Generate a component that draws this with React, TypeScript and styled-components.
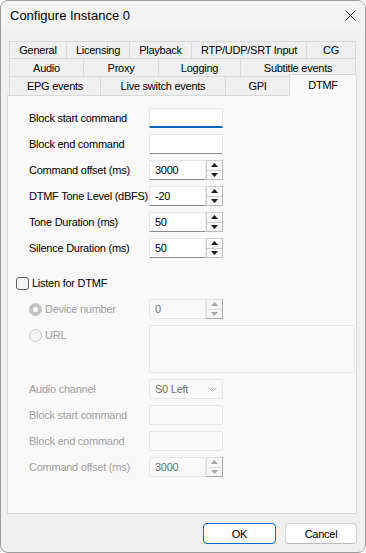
import { FC, ReactNode } from "react";
import styled, { createGlobalStyle } from "styled-components";

const GlobalStyle = createGlobalStyle`
  html, body {
    margin: 0;
    padding: 0;
    background: #ffffff;
  }
  body {
    font-family: "Liberation Sans", Arial, sans-serif;
    font-size: 11px;
    letter-spacing: -0.25px;
    color: #000;
  }
  * {
    box-sizing: border-box;
  }
`

const Window = styled.div`
  width: 366px;
  height: 553px;
  border: 1px solid #9c9c9c;
  border-radius: 8px;
  background: #f0f0f0;
  display: flex;
  flex-direction: column;
  overflow: hidden;
`

const TitleBar = styled.div`
  height: 29px;
  display: flex;
  align-items: center;
  justify-content: space-between;
  padding: 0 9px 0 9px;
  background: #f3f3f3;
`

const Title = styled.span`
  font-size: 13px;
  letter-spacing: 0;
`

const Body = styled.div`
  flex: 1;
  display: flex;
  flex-direction: column;
  padding: 11px 8px 8px 6px;
`

const TabStrip = styled.div`
  display: flex;
  flex-direction: column;
  padding: 0 2px;
`

const TabRow = styled.div<{ $h: number }>`
  display: flex;
  height: ${p => p.$h}px;
`

const Tab = styled.div<{ $w: number; $first?: boolean; $active?: boolean }>`
  width: ${p => p.$w}px;
  flex: none;
  display: flex;
  align-items: center;
  justify-content: center;
  white-space: nowrap;
  border-top: 1px solid #d9d9d9;
  border-right: 1px solid #d9d9d9;
  border-left: ${p => (p.$first || p.$active ? "1px solid #d9d9d9" : "none")};
  background: ${p => (p.$active ? "#f9f9f9" : "#f0f0f0")};
  ${p => p.$active && `
    position: relative;
    z-index: 1;
    height: 22px;
    margin: -2px 0 -1px -1px;
    padding-bottom: 2px;
  `}
`

const Panel = styled.div`
  height: 419px;
  border: 1px solid #d9d9d9;
  background: #f9f9f9;
  padding: 12px 1px 0 8px;
  display: flex;
  flex-direction: column;
`

const FormGrid = styled.div`
  display: grid;
  grid-template-columns: 120px auto;
  row-gap: 6px;
  margin-left: 13px;
  align-items: center;
`

const Label = styled.div<{ $disabled?: boolean; $top?: boolean }>`
  display: flex;
  align-items: center;
  height: 20px;
  white-space: nowrap;
  align-self: ${p => (p.$top ? "start" : "center")};
  color: ${p => (p.$disabled ? "#a0a0a0" : "#000")};
`

const TextBox = styled.input<{ $focused?: boolean; $w?: number }>`
  width: ${p => p.$w ?? 74}px;
  height: 20px;
  margin: 0;
  padding: 0 0 0 5px;
  font: inherit;
  letter-spacing: inherit;
  color: #000;
  background: #ffffff;
  border: 1px solid #e6e6e6;
  border-bottom: ${p => (p.$focused ? "2px solid #0067c0" : "1px solid #8a8a8a")};
  border-radius: 1px;
  outline: none;

  &:disabled {
    background: #f9f9f9;
    border: 1px solid #e6e6e6;
    color: #707070;
  }
`

const TextArea = styled.div`
  width: 206px;
  height: 48px;
  border: 1px solid #e6e6e6;
  border-radius: 1px;
  background: #f9f9f9;
`

const SpinWrap = styled.div`
  display: flex;
  width: 74px;
  height: 20px;
`

const SpinButtons = styled.div<{ $disabled?: boolean }>`
  width: 17px;
  display: flex;
  flex-direction: column;
  border-right: 1px solid ${p => (p.$disabled ? "#a8a8a8" : "#bcbcbc")};
  border-bottom: 1px solid ${p => (p.$disabled ? "#a8a8a8" : "#bcbcbc")};
  background: #f0f0f0;
`

const SpinButton = styled.div<{ $disabled?: boolean }>`
  flex: 1;
  display: flex;
  align-items: center;
  justify-content: center;
  border: 1px solid ${p => (p.$disabled ? "#e0e0e0" : "#cfcfcf")};
  border-right: none;
  border-bottom: none;
  background: ${p => (p.$disabled ? "#f6f6f6" : "#fbfbfb")};
  color: ${p => (p.$disabled ? "#a8a8a8" : "#1a1a1a")};
`

const SelectBox = styled.div`
  width: 74px;
  height: 20px;
  display: flex;
  align-items: center;
  justify-content: space-between;
  padding: 0 5px 0 5px;
  border: 1px solid #e6e6e6;
  border-radius: 2px;
  background: #f9f9f9;
  color: #707070;
`

const CheckRow = styled.div`
  display: flex;
  align-items: center;
  height: 18px;
  margin-top: 16px;
  gap: 3px;
`

const CheckBox = styled.div`
  width: 13px;
  height: 13px;
  border: 1px solid #5f5f5f;
  border-radius: 3px;
  background: #f5f5f5;
`

const LowerGrid = styled(FormGrid)`
  margin-top: 7px;
`

const Radio = styled.span<{ $checked?: boolean }>`
  width: 13px;
  height: 13px;
  margin-right: 3px;
  border-radius: 50%;
  flex: none;
  display: flex;
  align-items: center;
  justify-content: center;
  background: ${p => (p.$checked ? "#c2c2c2" : "#f6f6f6")};
  border: ${p => (p.$checked ? "none" : "1px solid #c6c6c6")};

  &::after {
    content: "";
    display: ${p => (p.$checked ? "block" : "none")};
    width: 5px;
    height: 5px;
    border-radius: 50%;
    background: #ffffff;
  }
`

const Footer = styled.div`
  display: flex;
  justify-content: flex-end;
  gap: 9px;
  margin-top: 9px;
`

const Button = styled.button<{ $default?: boolean; $w: number }>`
  width: ${p => p.$w}px;
  height: 21px;
  margin: 0;
  padding: 0;
  font: inherit;
  letter-spacing: inherit;
  color: #000;
  background: #fdfdfd;
  border: 1px solid ${p => (p.$default ? "#0067c0" : "#d3d3d3")};
  border-bottom-color: ${p => (p.$default ? "#0067c0" : "#b9b9b9")};
  border-radius: 4px;
`

const Arrow: FC<{ up?: boolean }> = ({ up }) => (
    <svg width="7" height="4" viewBox="0 0 7 4">
        <path d={up ? "M0 4 L3.5 0 L7 4 Z" : "M0 0 L3.5 4 L7 0 Z"} fill="currentColor" />
    </svg>
)

const Spin: FC<{ value: string; disabled?: boolean }> = ({ value, disabled }) => (
    <SpinWrap>
        <TextBox $w={57} value={value} readOnly disabled={disabled} />
        <SpinButtons $disabled={disabled}>
            <SpinButton $disabled={disabled}><Arrow up /></SpinButton>
            <SpinButton $disabled={disabled}><Arrow /></SpinButton>
        </SpinButtons>
    </SpinWrap>
)

type TabDef = { label: string; w: number; active?: boolean };

const rows: { h: number; tabs: TabDef[] }[] = [
    {
        h: 17,
        tabs: [
            { label: "General", w: 58 },
            { label: "Licensing", w: 63 },
            { label: "Playback", w: 62 },
            { label: "RTP/UDP/SRT Input", w: 115 },
            { label: "CG", w: 49 },
        ],
    },
    {
        h: 18,
        tabs: [
            { label: "Audio", w: 75 },
            { label: "Proxy", w: 75 },
            { label: "Logging", w: 82 },
            { label: "Subtitle events", w: 115 },
        ],
    },
    {
        h: 19,
        tabs: [
            { label: "EPG events", w: 92 },
            { label: "Live switch events", w: 125 },
            { label: "GPI", w: 64 },
            { label: "DTMF", w: 68, active: true },
        ],
    },
]

const Row: FC<{ label: string; disabled?: boolean; children: ReactNode }> = ({ label, disabled, children }) => (
    <>
        <Label $disabled={disabled}>{label}</Label>
        {children}
    </>
)

export default function App() {
    return (
        <>
            <GlobalStyle />
            <Window>
                <TitleBar>
                    <Title>Configure Instance 0</Title>
                    <svg width="11" height="11" viewBox="0 0 11 11">
                        <path d="M0.5 0.5 L10.5 10.5 M10.5 0.5 L0.5 10.5" stroke="#1a1a1a" strokeWidth="1" />
                    </svg>
                </TitleBar>
                <Body>
                    <TabStrip>
                        {rows.map((r, i) => (
                            <TabRow key={i} $h={r.h}>
                                {r.tabs.map((t, j) => (
                                    <Tab key={t.label} $w={t.w} $first={j === 0} $active={t.active}>
                                        {t.label}
                                    </Tab>
                                ))}
                            </TabRow>
                        ))}
                    </TabStrip>
                    <Panel>
                        <FormGrid>
                            <Row label="Block start command"><TextBox $focused value="" readOnly /></Row>
                            <Row label="Block end command"><TextBox value="" readOnly /></Row>
                            <Row label="Command offset (ms)"><Spin value="3000" /></Row>
                            <Row label="DTMF Tone Level (dBFS)"><Spin value="-20" /></Row>
                            <Row label="Tone Duration (ms)"><Spin value="50" /></Row>
                            <Row label="Silence Duration (ms)"><Spin value="50" /></Row>
                        </FormGrid>

                        <CheckRow>
                            <CheckBox />
                            <span>Listen for DTMF</span>
                        </CheckRow>

                        <LowerGrid>
                            <Label $disabled><Radio $checked />Device number</Label>
                            <Spin value="0" disabled />
                            <Label $disabled $top><Radio />URL</Label>
                            <TextArea />
                            <Row label="Audio channel" disabled>
                                <SelectBox>
                                    <span>S0 Left</span>
                                    <svg width="9" height="5" viewBox="0 0 9 5">
                                        <path d="M0.5 0.5 L4.5 4.5 L8.5 0.5" stroke="#b0b0b0" fill="none" />
                                    </svg>
                                </SelectBox>
                            </Row>
                            <Row label="Block start command" disabled><TextBox value="" readOnly disabled /></Row>
                            <Row label="Block end command" disabled><TextBox value="" readOnly disabled /></Row>
                            <Row label="Command offset (ms)" disabled><Spin value="3000" disabled /></Row>
                        </LowerGrid>
                    </Panel>
                    <Footer>
                        <Button $default $w={73}>OK</Button>
                        <Button $w={72}>Cancel</Button>
                    </Footer>
                </Body>
            </Window>
        </>
    );
}
